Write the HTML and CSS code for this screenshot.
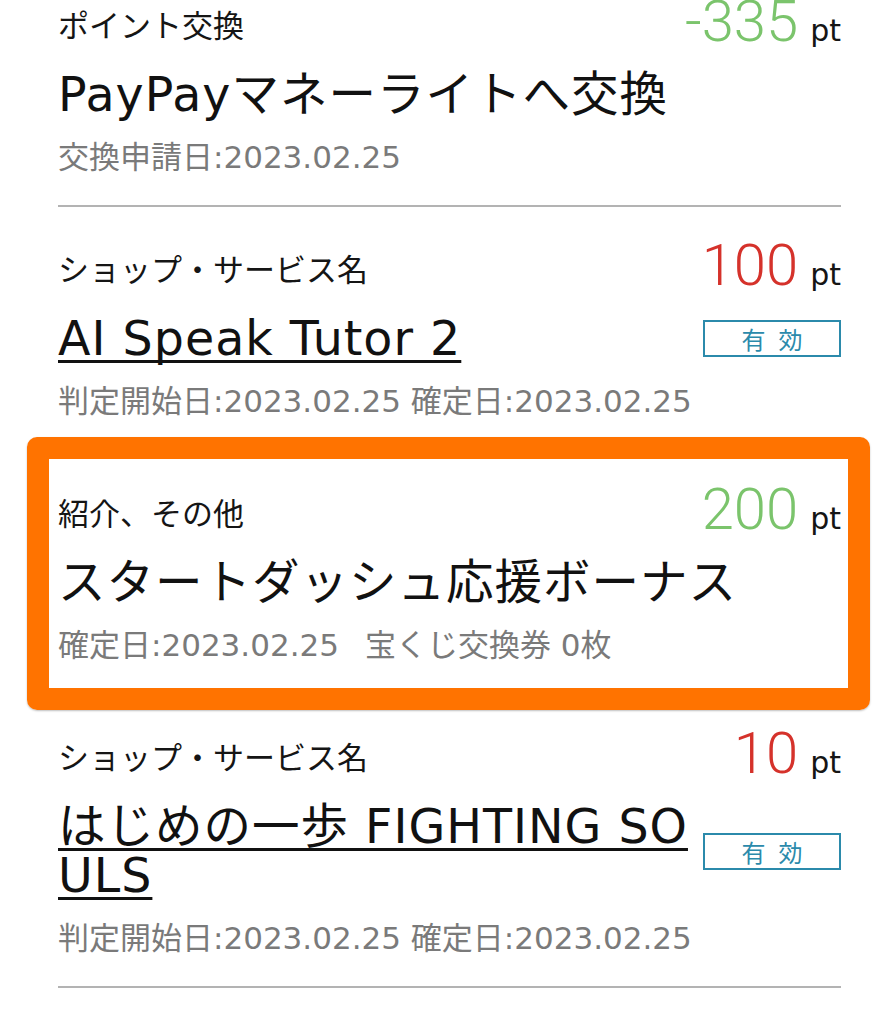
FILE: index.html
```html
<!DOCTYPE html>
<html lang="ja">
<head>
<meta charset="utf-8">
<title>ポイント履歴</title>
<link rel="stylesheet" href="styles.css">
</head>
<body>
<main class="list">
  <article class="item">
    <div class="item-head">
      <span class="category">ポイント交換</span>
      <span class="points plus">-335<span class="unit">pt</span></span>
    </div>
    <div class="item-body">
      <h2 class="title">PayPayマネーライトへ交換</h2>
    </div>
    <p class="dates">交換申請日:2023.02.25</p>
  </article>

  <article class="item">
    <div class="item-head">
      <span class="category">ショップ・サービス名</span>
      <span class="points minus">100<span class="unit">pt</span></span>
    </div>
    <div class="item-body">
      <h2 class="title"><a class="title-link" href="#">AI Speak Tutor 2</a></h2>
      <span class="badge">有効</span>
    </div>
    <p class="dates">判定開始日:2023.02.25 確定日:2023.02.25</p>
  </article>

  <article class="item highlight">
    <div class="item-head">
      <span class="category">紹介、その他</span>
      <span class="points plus">200<span class="unit">pt</span></span>
    </div>
    <div class="item-body">
      <h2 class="title">スタートダッシュ応援ボーナス</h2>
    </div>
    <p class="dates">確定日:2023.02.25<span class="extra">宝くじ交換券 0枚</span></p>
  </article>

  <article class="item">
    <div class="item-head">
      <span class="category">ショップ・サービス名</span>
      <span class="points minus">10<span class="unit">pt</span></span>
    </div>
    <div class="item-body">
      <h2 class="title"><a class="title-link" href="#">はじめの一歩 FIGHTING SOULS</a></h2>
      <span class="badge">有効</span>
    </div>
    <p class="dates">判定開始日:2023.02.25 確定日:2023.02.25</p>
  </article>
</main>
</body>
</html>
```

FILE: styles.css
```css
html, body {
  margin: 0;
  padding: 0;
  background: #ffffff;
}

body {
  font-family: "DejaVu Sans", "Noto Sans CJK JP", sans-serif;
  color: #111111;
}

.list {
  margin-top: -37px;
  padding: 0 33px 0 58px;
}

.item {
  position: relative;
  padding: 29px 0 30px;
  border-bottom: 2px solid #b3b3b3;
}

.item-head {
  display: flex;
  justify-content: space-between;
  align-items: center;
}

.category {
  font-size: 31px;
  line-height: 31px;
  color: #151515;
}

.points {
  font-family: Roboto, "DejaVu Sans", sans-serif;
  font-weight: 300;
  font-size: 58px;
  line-height: 58px;
  white-space: nowrap;
}

.points.plus {
  color: #7bc46c;
}

.points.minus {
  color: #d5322b;
}

.unit {
  font-family: "DejaVu Sans", sans-serif;
  font-weight: 400;
  font-size: 30px;
  margin-left: 12px;
  color: #151515;
}

.item-body {
  display: flex;
  align-items: center;
  gap: 6px;
  margin-top: 10px;
}

.title {
  flex: 1;
  margin: 0;
  font-size: 47.5px;
  line-height: 49px;
  letter-spacing: 1px;
  font-weight: 400;
  word-break: break-all;
  color: #111111;
}

.title-link {
  color: #111111;
  text-decoration: underline;
  text-decoration-thickness: 3px;
  text-underline-offset: 5px;
  text-decoration-skip-ink: none;
}

.badge {
  flex: none;
  box-sizing: border-box;
  width: 138px;
  height: 37px;
  border: 2px solid #2b8aab;
  color: #2b8aab;
  font-family: "Noto Sans CJK JP", sans-serif;
  font-size: 24px;
  letter-spacing: 13px;
  padding-left: 13px;
  display: flex;
  align-items: center;
  justify-content: center;
}

.dates {
  margin: 20px 0 0;
  font-size: 31px;
  line-height: 36px;
  color: #7a7a7a;
  white-space: nowrap;
}

.extra {
  margin-left: 26px;
}

.highlight::after {
  content: "";
  position: absolute;
  left: -31px;
  right: -29px;
  top: -14px;
  bottom: -17px;
  border: 22px solid #ff7300;
  border-radius: 10px;
  box-shadow: 0 1px 2px rgba(0, 0, 0, 0.25);
  pointer-events: none;
}
```
